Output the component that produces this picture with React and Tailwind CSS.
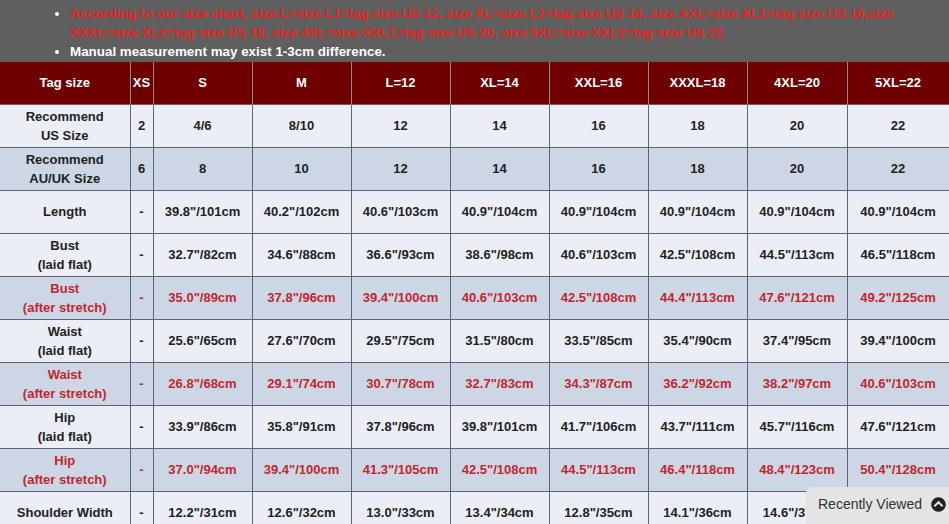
import React from "react";
import { FaChevronCircleUp } from "react-icons/fa";

const sizes = ["XS", "S", "M", "L=12", "XL=14", "XXL=16", "XXXL=18", "4XL=20", "5XL=22"];

const rows = [
  { label: ["Recommend", "US Size"], values: ["2", "4/6", "8/10", "12", "14", "16", "18", "20", "22"] },
  { label: ["Recommend", "AU/UK Size"], values: ["6", "8", "10", "12", "14", "16", "18", "20", "22"], dark: true },
  { label: ["Length"], values: ["-", '39.8"/101cm', '40.2"/102cm', '40.6"/103cm', '40.9"/104cm', '40.9"/104cm', '40.9"/104cm', '40.9"/104cm', '40.9"/104cm'] },
  { label: ["Bust", "(laid flat)"], values: ["-", '32.7"/82cm', '34.6"/88cm', '36.6"/93cm', '38.6"/98cm', '40.6"/103cm', '42.5"/108cm', '44.5"/113cm', '46.5"/118cm'] },
  { label: ["Bust", "(after stretch)"], values: ["-", '35.0"/89cm', '37.8"/96cm', '39.4"/100cm', '40.6"/103cm', '42.5"/108cm', '44.4"/113cm', '47.6"/121cm', '49.2"/125cm'], dark: true, red: true },
  { label: ["Waist", "(laid flat)"], values: ["-", '25.6"/65cm', '27.6"/70cm', '29.5"/75cm', '31.5"/80cm', '33.5"/85cm', '35.4"/90cm', '37.4"/95cm', '39.4"/100cm'] },
  { label: ["Waist", "(after stretch)"], values: ["-", '26.8"/68cm', '29.1"/74cm', '30.7"/78cm', '32.7"/83cm', '34.3"/87cm', '36.2"/92cm', '38.2"/97cm', '40.6"/103cm'], dark: true, red: true },
  { label: ["Hip", "(laid flat)"], values: ["-", '33.9"/86cm', '35.8"/91cm', '37.8"/96cm', '39.8"/101cm', '41.7"/106cm', '43.7"/111cm', '45.7"/116cm', '47.6"/121cm'] },
  { label: ["Hip", "(after stretch)"], values: ["-", '37.0"/94cm', '39.4"/100cm', '41.3"/105cm', '42.5"/108cm', '44.5"/113cm', '46.4"/118cm', '48.4"/123cm', '50.4"/128cm'], dark: true, red: true },
  { label: ["Shoulder Width"], values: ["-", '12.2"/31cm', '12.6"/32cm', '13.0"/33cm', '13.4"/34cm', '12.8"/35cm', '14.1"/36cm', '14.6"/37cm', '15.0"/38cm'] },
];

const colWidths = [130, 23, 99, 99, 99, 99, 99, 99, 100, 102];

export default function App() {
  return (
    <div
      className="relative w-[949px] h-[524px] overflow-hidden bg-white"
      style={{ fontFamily: '"Liberation Sans", Arial, sans-serif' }}
    >
      {/* Notes band */}
      <div className="h-[62px] bg-[#5f5f5f] pt-[4px]">
        <ul className="list-disc pl-[70px] text-[13.4px] font-bold leading-[19px] marker:text-white">
          <li className="text-[#e8221e]">
            According to our size chart, size L=size L1=tag size US 12, size XL=size L2=tag size US 14, size XXL=size XL1=tag size US 16,size
            <br />
            XXXL=size XL2=tag size US 18, size 4XL=size XXL1=tag size US 20, size 5XL=size XXL2=tag size US 22.
          </li>
          <li className="text-white">Manual measurement may exist 1-3cm difference.</li>
        </ul>
      </div>

      {/* Size table */}
      <table className="w-[949px] table-fixed border-collapse text-[13px] font-bold text-[#222]">
        <colgroup>
          {colWidths.map((w, i) => (
            <col key={i} style={{ width: w }} />
          ))}
        </colgroup>
        <thead>
          <tr className="h-[42px] bg-[#6e0000] text-white">
            <th className="border-r border-[#8c8c8c] font-bold">Tag size</th>
            {sizes.map((s) => (
              <th key={s} className="border-x border-[#8c8c8c] font-bold">
                {s}
              </th>
            ))}
          </tr>
        </thead>
        <tbody>
          {rows.map((row, i) => (
            <tr
              key={i}
              className={`h-[43px] ${row.dark ? "bg-[#cdd6e4]" : "bg-[#ebeff5]"} ${row.red ? "text-[#c1272d]" : ""}`}
            >
              <td className="border border-l-0 border-[#5d6570] text-center leading-[19px]">
                {row.label.map((l) => (
                  <div key={l}>{l}</div>
                ))}
              </td>
              {row.values.map((v, j) => (
                <td key={j} className="border border-[#5d6570] text-center">
                  {v}
                </td>
              ))}
            </tr>
          ))}
        </tbody>
      </table>

      {/* Recently viewed tab */}
      <div className="absolute right-0 bottom-0 flex h-[37px] w-[143px] items-center gap-[9px] rounded-tl-[6px] bg-[#e4e4e4] pb-[3px] pl-[12px] text-[14px] text-[#333]">
        <span>Recently Viewed</span>
        <FaChevronCircleUp className="h-[15px] w-[15px] text-[#222]" />
      </div>
    </div>
  );
}
